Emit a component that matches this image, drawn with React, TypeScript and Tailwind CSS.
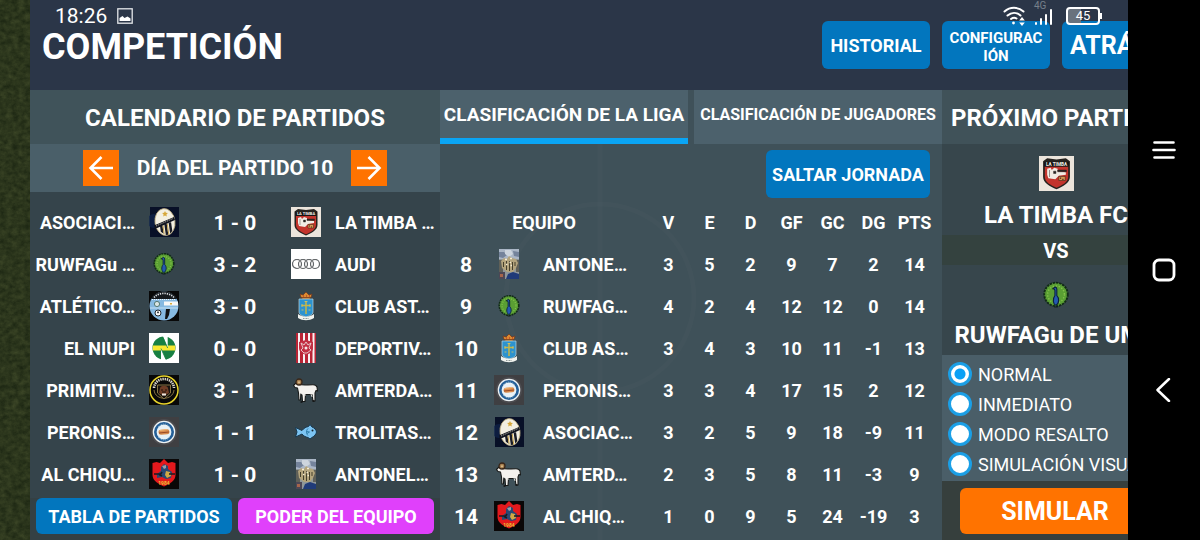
import React, { useState } from "react";

type CrestName =
  | "asociacion"
  | "timba"
  | "peacock"
  | "audi"
  | "atletico"
  | "asturias"
  | "niupi"
  | "deportivo"
  | "primitivos"
  | "ram"
  | "peronistas"
  | "fish"
  | "chiqui"
  | "antonel";

const crestArt: Record<CrestName, React.ReactNode> = {
  asociacion: (
    <>
      <rect x="1" width="29" height="30" fill="#081027" />
      <circle cx="5" cy="14" r="7" fill="#10234c" opacity=".7" />
      <g transform="rotate(-8 16 15)">
        <ellipse cx="16" cy="15" rx="10" ry="13.5" fill="#f3efe2" stroke="#b9a878" strokeWidth=".8" />
        <path d="M10.500 18H13v8.500L10.500 24zM15 17h2.500v11H15zM19.500 16H22v9l-2.500 2z" fill="#1a1c26" />
        <path d="M13 18h1v9l-1-.5zM17.500 17h1v11h-1z" fill="#c6a14a" />
      </g>
      <path d="m16 4 .9 1.800 2 .2-1.500 1.400.4 2-1.800-1-1.800 1 .4-2-1.500-1.400 2-.2z" fill="#d6a73a" />
      <path d="m5 18.500 20-8.500 1 3-20 9z" fill="#11141f" />
      <path d="m7 19 17-7.500" stroke="#d8d3c2" strokeWidth=".8" strokeDasharray="1.200 .8" />
    </>
  ),
  timba: (
    <>
      <rect width="30" height="30" fill="#ece5dc" />
      <path d="M3.500 4.500 7 2l8 1 8-1 3.500 2.500V18c0 5-6 8-11.500 10.500C9.500 26 3.500 23 3.500 18z" fill="#26231f" />
      <path d="M5 9h20v9c0 4.500-5 7-10 9.300C10 25 5 22.500 5 18z" fill="#c3342c" />
      <path d="M4.500 5h21v4h-21z" fill="#151515" />
      <text x="15" y="8.400" fontSize="4" fontWeight="700" textAnchor="middle" fill="#f4f0e8">LA TIMBA</text>
      <path d="m7 11 3-1 1 2 2-2 3 1v2l7 1v2l-6 1-3 3-6-1-1-3z" fill="#f1ece4" />
      <path d="M12.500 13h2v2h-2zM16 12h7.500v1.500H16zM9 12v6" fill="#292522" stroke="#292522" strokeWidth=".4" />
      <path d="M17 17.500h5.500V21H17z" fill="#d59853" stroke="#3a2217" strokeWidth=".5" />
      <path d="M18 19h1M20 20h1" stroke="#3a2217" />
    </>
  ),
  peacock: (
    <>
      <circle cx="15" cy="14.500" r="9.800" fill="#5a9f33" stroke="#122b18" strokeWidth="1.600" strokeDasharray="2 .7" />
      <circle cx="15" cy="14.500" r="7" fill="none" stroke="#86c44c" strokeWidth="1.200" strokeDasharray="1 1.500" />
      <path d="M13 9.500c.5-1.500 2.500-1.500 2.700.5v5.500c2.300 2 1.800 7-.7 8-2.500-.5-3-5.500-.9-8V11z" fill="#2459b0" stroke="#0c213b" strokeWidth=".9" />
      <path d="M11.800 9.800h1.500M13.500 25h3" stroke="#101f20" />
    </>
  ),
  audi: (
    <>
      <rect width="30" height="30" fill="#fff" />
      <g fill="none" stroke="#24282b" strokeWidth="1.100">
        <circle cx="6" cy="15" r="4.500" />
        <circle cx="12" cy="15" r="4.500" />
        <circle cx="18" cy="15" r="4.500" />
        <circle cx="24" cy="15" r="4.500" />
      </g>
      <g fill="none" stroke="#c5c8ca" strokeWidth=".4">
        <circle cx="6" cy="15" r="4.500" />
        <circle cx="12" cy="15" r="4.500" />
        <circle cx="18" cy="15" r="4.500" />
        <circle cx="24" cy="15" r="4.500" />
      </g>
    </>
  ),
  atletico: (
    <>
      <rect width="30" height="30" fill="#080808" />
      <circle cx="15" cy="15" r="14.500" fill="#86b9e1" />
      <path d="M2 8C7-2 23-2 28 8z" fill="#15191d" />
      <path d="M5 6.500C10 1 20 1 25 6.500" fill="none" stroke="#d8dce0" strokeWidth="1.600" strokeDasharray="1.300 1" />
      <path d="M3 8.500h24" stroke="#f4f8fa" strokeDasharray="1 1" />
      <path d="M15 10.500h14v4H15z" fill="#f7f7f7" />
      <path d="M21 12h2v1.500h-2z" fill="#dcac38" />
      <circle cx="8" cy="13" r="2.600" fill="#dbe6e4" stroke="#577b75" />
      <path d="M1 17h28" stroke="#c7e2f6" />
      <circle cx="9" cy="22" r="3" fill="#fafafa" stroke="#22272d" />
      <path d="m8 21 1-.8 1 .8-.4 1.300H8.400z" fill="#22272d" />
      <path d="M17 18h4l-1 6-2 4h-2z" fill="#111" />
    </>
  ),
  asturias: (
    <>
      <path d="M10 4h10l-1.500 4h-7z" fill="#b77227" />
      <path d="m9 3 3 1 3-3 3 3 3-1-1 3.500H10z" fill="#d98b31" stroke="#6f3520" strokeWidth=".7" />
      <path d="M12 5h1m2 0h1m2 0h1" stroke="#b72323" />
      <path d="M8 8h14v13c0 3-4 4-7 5-3-1-7-2-7-5z" fill="#2d93cf" stroke="#b9d4df" strokeWidth=".7" />
      <path d="M15 10v13M10.500 14.500h9" stroke="#c8b645" strokeWidth="1.500" />
      <path d="M13.500 10.500h3M11 13v3m8-3v3M10.500 19h2m5 0h2" stroke="#d8c65f" strokeWidth=".8" />
      <path d="M7 23c5 3.500 11 3.500 16 0v4c-5 3-11 3-16 0z" fill="#f0f2ee" />
      <path d="M12 27.500h6" stroke="#929c9a" strokeDasharray="1 .5" />
    </>
  ),
  niupi: (
    <>
      <rect width="30" height="30" fill="#fff" />
      <circle cx="15" cy="15" r="11.500" fill="#188042" />
      <path d="M3.800 12.500h22.400v5H3.800z" fill="#f8e831" />
      <path d="M13.500 2h5.200v13z" fill="#fff" />
      <path d="M12 28V15.500L17.500 28z" fill="#fff" />
      <path d="m12 15.500 5 11M14 4.500l4.700 10.500" stroke="#188042" strokeWidth=".8" />
    </>
  ),
  deportivo: (
    <>
      <rect x="5" width="20" height="30" fill="#f7f2f3" />
      <path d="M5 0h2v30H5zM9 0h3v30H9zM14 0h3v30h-3zM19 0h2.500v30H19zM23.500 0H25v30h-1.500z" fill="#b92435" />
      <path d="m8 9 7-2 7 2v6c0 4-4 6-7 7-3-1-7-3-7-7z" fill="#c23043" />
      <path d="m10 10 3 2 2-3 2 3 3-2-2 5 2 2-4 3h-3l-3-3 2-2z" fill="none" stroke="#ead2d2" strokeWidth=".9" />
      <circle cx="15" cy="15" r="1.500" fill="#f6e8e8" />
    </>
  ),
  primitivos: (
    <>
      <rect width="30" height="30" fill="#080808" />
      <circle cx="15" cy="15" r="14" fill="#080808" stroke="#e8d42c" strokeWidth="1.500" />
      <path d="M5 13C6 1 24 1 25 13" fill="none" stroke="#ddd9cd" strokeWidth="2.600" strokeDasharray="1.400 .8" />
      <path d="M5 15c1 11 19 11 20 0" fill="none" stroke="#95804a" strokeWidth=".9" />
      <path d="M8.500 10h13v8L15 24l-6.500-6z" fill="#17130f" stroke="#877444" />
      <path d="M11 13c1-3 7-3 8 0l1 5-5 3-5-3z" fill="#6f3d25" />
      <path d="M12 15h2m2 0h2m-5 2h4" stroke="#20130d" />
      <path d="M13 18.500h4v2h-4z" fill="#ede8df" />
    </>
  ),
  ram: (
    <>
      <path d="M8 9.500c3 .8 8 .3 14 .3 2 0 3.500.7 4 2.200l.5 4-1.500-.5-1 2.500v8h-2l-1-6.500h-6.500l-.5 7h-2.500l-.5-6.500-1-.5-.2-.5-.3 6H8l-.5-7L6.500 13 4 12.500 2.500 10.500 5 8z" fill="#f4f2ee" stroke="#171918" strokeWidth="1.100" strokeLinejoin="round" />
      <path d="M14 19v2m6-2 1 3" stroke="#d7d7d3" />
      <circle cx="8" cy="7" r="3" fill="#a8804f" stroke="#39271a" strokeWidth="1.300" />
      <circle cx="8" cy="7.200" r="1" fill="#d9bd90" />
      <path d="M9.500 27h2m10-1h2" stroke="#111" strokeWidth="1.500" />
    </>
  ),
  peronistas: (
    <>
      <rect width="30" height="30" fill="#3f3f42" />
      <circle cx="15" cy="15" r="13" fill="#4c4c50" />
      <circle cx="15" cy="15" r="10" fill="#e8f1f6" stroke="#edf2f4" strokeWidth="2.600" />
      <circle cx="15" cy="15" r="8.700" fill="none" stroke="#245f98" strokeWidth="2.600" />
      <path d="M9 10c4-4 8-4 12 0M9 20c4 4 8 4 12 0" fill="none" stroke="#9fc7dc" strokeWidth=".8" strokeDasharray="1 1" />
      <rect x="9.500" y="12.500" width="11" height="5" rx="2.500" fill="#d98c4d" transform="rotate(-5 15 15)" />
      <path d="m10 16 10-1" stroke="#994925" />
      <path d="m11 13.500 7-1" stroke="#f0b575" />
    </>
  ),
  fish: (
    <>
      <path d="M4.500 10.500 11 13.500c2-2.500 4-3.500 6.500-4L19 7.500l2 2.500c2.500 1 4 2.500 4.500 5-.5 2.500-2 4-4.500 5.500L19 22l-2-1.500c-2.500-.5-4.500-1.500-6-3.500L4.500 20l1.500-5z" fill="#7cc4f2" stroke="#17384f" strokeWidth="1" strokeLinejoin="round" />
      <path d="M17 11.500c-2 2-2 5 0 7m-1.500-4 3 .5-2.500 1.500" fill="none" stroke="#2f7fad" strokeWidth="1" />
      <circle cx="21.500" cy="13.500" r="1" fill="#14232c" />
    </>
  ),
  chiqui: (
    <>
      <rect width="30" height="30" fill="#0a0707" />
      <path d="m3.500 4 4-1 3.500 1 4-4 4 4 4-1 3.500 1v12c0 6-6 9-11.500 11.500C9.500 25 3.500 22 3.500 16z" fill="#e4191d" />
      <path d="m12 8 3-3 4 2v3l4 3-1 6-5 1-4-2-5 1v-4l4-3z" fill="#294873" />
      <path d="m13 7 4-1v3l-2 1z" fill="#9a9fa8" />
      <path d="m17 12 4 1 1 4-4 2-2-3z" fill="#d1a943" />
      <path d="M5 15h7m8 0h6M13 13l-2 3 2 1" fill="none" stroke="#181a22" strokeWidth="1.600" />
      <text x="15" y="26" fontSize="5" fontWeight="700" textAnchor="middle" fill="#e8c332">1984</text>
    </>
  ),
  antonel: (
    <>
      <rect x="5" width="20" height="30" fill="#8f979a" />
      <path d="M5 0h20v10H5z" fill="#aab6c6" />
      <path d="M5 3h5l3 3-4 3-4-1zM19 2l6 1v5l-5-1z" fill="#74839b" />
      <path d="M11 1h6l2 4-4 3-4-3z" fill="#cdd5de" />
      <path d="M5 11h4v13H5zM22 11h3v12h-3z" fill="#5f6058" />
      <path d="m7 12 3-3 3 1 2-3 3 2 4 1 2 4-2 5-3 4h-6l-5-4z" fill="#b3a47d" />
      <path d="M9.500 13v5m3-6v9m3-9v10m3-9v8m2.500-8v4" stroke="#443f2c" />
      <path d="M11 10.500h2m3-1h2m-6 6h1.500m3 1H18m-2.500-3H17" stroke="#f5ecd2" strokeWidth="1.400" />
      <path d="M5 23h6v7H5z" fill="#4d4755" />
      <path d="m14 25 5-2 6 2v5H12z" fill="#203b79" />
      <path d="M6 25h3v3H6z" fill="#a7654c" />
    </>
  ),
};

function Crest({ name, className = "size-[30px]" }: { name: CrestName; className?: string }) {
  return (
    <svg viewBox="0 0 30 30" className={`block shrink-0 ${className}`} aria-hidden="true">
      {crestArt[name]}
    </svg>
  );
}

const matches: [string, CrestName, string, CrestName, string][] = [
  ["ASOCIACI…", "asociacion", "1 - 0", "timba", "LA TIMBA …"],
  ["RUWFAGu …", "peacock", "3 - 2", "audi", "AUDI"],
  ["ATLÉTICO…", "atletico", "3 - 0", "asturias", "CLUB AST…"],
  ["EL NIUPI", "niupi", "0 - 0", "deportivo", "DEPORTIV…"],
  ["PRIMITIV…", "primitivos", "3 - 1", "ram", "AMTERDA…"],
  ["PERONIS…", "peronistas", "1 - 1", "fish", "TROLITAS…"],
  ["AL CHIQU…", "chiqui", "1 - 0", "antonel", "ANTONEL…"],
];

const columns = ["V", "E", "D", "GF", "GC", "DG", "PTS"];

const standings: [number, CrestName, string, number[]][] = [
  [8, "antonel", "ANTONE…", [3, 5, 2, 9, 7, 2, 14]],
  [9, "peacock", "RUWFAG…", [4, 2, 4, 12, 12, 0, 14]],
  [10, "asturias", "CLUB AS…", [3, 4, 3, 10, 11, -1, 13]],
  [11, "peronistas", "PERONIS…", [3, 3, 4, 17, 15, 2, 12]],
  [12, "asociacion", "ASOCIAC…", [3, 2, 5, 9, 18, -9, 11]],
  [13, "ram", "AMTERD…", [2, 3, 5, 8, 11, -3, 9]],
  [14, "chiqui", "AL CHIQ…", [1, 0, 9, 5, 24, -19, 3]],
];

const modes = ["NORMAL", "INMEDIATO", "MODO RESALTO", "SIMULACIÓN VISUAL"];

function Grass() {
  return (
    <svg className="absolute inset-0 size-full" aria-hidden="true">
      <filter id="grass" x="0" y="0" width="100%" height="100%" colorInterpolationFilters="sRGB">
        <feTurbulence type="fractalNoise" baseFrequency="0.16 0.2" numOctaves="4" seed="4" />
        <feColorMatrix values="0.16 0 0 0 0.09  0.16 0 0 0 0.13  0.1 0 0 0 0.06  0 0 0 0 1" />
      </filter>
      <rect width="100%" height="100%" filter="url(#grass)" />
    </svg>
  );
}

function StatusBar() {
  return (
    <div className="pointer-events-none absolute inset-x-0 top-0 z-10 flex h-8 items-center pr-7 pl-[25px] text-white">
      <span className="text-[21px] leading-8">18:26</span>
      <svg viewBox="0 0 16 16" className="ml-2.5 size-4" aria-hidden="true">
        <rect x=".8" y=".8" width="14.400" height="14.400" fill="none" stroke="#e4e7ea" strokeWidth="1.300" />
        <path d="M2.500 13V10l3-2 2 2 3-1.500 3 2V13z" fill="#fff" />
      </svg>
      <span className="flex-1" />
      <svg viewBox="0 0 24 22" className="h-[22px] w-6" fill="none" stroke="#fff" strokeWidth="2" strokeLinecap="round" aria-hidden="true">
        <path d="M2.500 6.500c5.500-5 13.500-5 19 0M5.500 10.500c4-3.500 9-3.500 13 0M9 14c2-1.500 4-1.500 5.500-.5" />
        <circle cx="11.500" cy="18" r="1.400" fill="#fff" stroke="none" />
        <path d="m20 12 2.800 3.500h-5.600zM20 21l2.800-3.500h-5.600z" fill="#fff" stroke="none" />
      </svg>
      <span className="relative ml-2 h-[18px] w-5">
        <span className="absolute -top-[7px] left-0 text-[10px] leading-3 text-[#77808b]">4G</span>
        <svg viewBox="0 0 20 18" className="size-full" stroke="#fff" strokeWidth="2" strokeLinecap="round" aria-hidden="true">
          <path d="M2 16v1M7 12v5M12 8v9M17 3v14" />
        </svg>
      </span>
      <span className="relative ml-3 flex h-[18px] w-[34px] items-center justify-center rounded border-2 border-white bg-linear-to-r from-[#69727d] from-45% to-transparent to-45% text-[13px] leading-4">
        45
        <span className="absolute top-1 -right-1 h-1.5 w-0.5 bg-white" />
      </span>
    </div>
  );
}

export default function App() {
  const [mode, setMode] = useState(modes[0]);
  return (
    <div className="flex h-screen overflow-hidden bg-black font-['Roboto',sans-serif] text-white">
      <div className="relative w-[30px] shrink-0 bg-[#2b351c]">
        <Grass />
      </div>

      <div className="relative flex min-w-0 flex-1 flex-col overflow-hidden">
        <StatusBar />
        <header className="flex h-[90px] shrink-0 items-start bg-[#2b3648] pl-3">
          <h1 className="flex-1 pt-[23px] text-4xl leading-12 font-bold">COMPETICIÓN</h1>
          <div className="-mr-[42px] flex shrink-0 gap-3 pt-[21px] font-bold">
            <button className="h-12 w-[108px] rounded-md bg-[#0276be] pt-0.5 text-lg">HISTORIAL</button>
            <button className="h-12 w-[108px] rounded-md bg-[#0276be] pt-1 text-[15px] leading-[18px]">
              CONFIGURAC
              <br />
              IÓN
            </button>
            <button className="h-12 w-[108px] rounded-md bg-[#0276be] pt-0.5 pl-2 text-left text-[25px]">ATRÁS</button>
          </div>
        </header>

        <main className="flex min-h-0 flex-1">
          <section className="flex min-w-0 flex-[410] flex-col bg-[#35444b]">
            <h2 className="h-[54px] shrink-0 bg-[#40535a] text-center text-2xl leading-[56px] font-bold">CALENDARIO DE PARTIDOS</h2>
            <div className="flex h-12 shrink-0 items-center justify-center gap-[18px] bg-[#4a5f69]">
              <button aria-label="Anterior" className="flex size-9 items-center justify-center bg-[#ff7300]">
                <svg viewBox="0 0 36 36" className="size-9" fill="none" stroke="#fff" strokeWidth="2.600" aria-hidden="true">
                  <path d="M30 18H8M18.500 7 7.500 18l11 11" />
                </svg>
              </button>
              <span className="pt-0.5 text-[21px] font-bold">DÍA DEL PARTIDO 10</span>
              <button aria-label="Siguiente" className="flex size-9 items-center justify-center bg-[#ff7300]">
                <svg viewBox="0 0 36 36" className="size-9" fill="none" stroke="#fff" strokeWidth="2.600" aria-hidden="true">
                  <path d="M6 18h22M17.500 7l11 11-11 11" />
                </svg>
              </button>
            </div>
            <ul className="flex-1 px-1.5 pt-[9px] font-bold whitespace-nowrap">
              {matches.map(([home, homeCrest, score, awayCrest, away]) => (
                <li key={home} className="grid h-[42px] grid-cols-[1fr_30px_84px_30px_1fr] items-center gap-x-3.5 text-lg">
                  <span className="flex min-w-0 justify-end pt-0.5">{home}</span>
                  <Crest name={homeCrest} />
                  <span className="pt-0.5 text-center text-[21px]">{score}</span>
                  <Crest name={awayCrest} />
                  <span className="min-w-0 pt-0.5">{away}</span>
                </li>
              ))}
            </ul>
            <div className="flex h-[42px] shrink-0 gap-1.5 bg-[#344044] px-1.5 pb-1.5 text-lg font-bold">
              <button className="flex-1 rounded-md bg-[#0276be] pt-0.5">TABLA DE PARTIDOS</button>
              <button className="flex-1 rounded-md bg-[#e040fb] pt-0.5">PODER DEL EQUIPO</button>
            </div>
          </section>

          <section className="relative flex min-w-0 flex-[502] flex-col bg-[#3f5159]">
            <svg className="pointer-events-none absolute inset-0 size-full" fill="none" stroke="#ffffff" strokeOpacity=".015" strokeWidth="5" aria-hidden="true">
              <circle cx="160" cy="208" r="94" />
              <path d="M160 0v450" />
            </svg>
            <div className="relative flex h-[54px] shrink-0 gap-1.5 font-bold whitespace-nowrap">
              <button className="flex-1 border-b-6 border-[#0aa5f5] bg-[#4c616c] pt-0.5 text-[19px]">CLASIFICACIÓN DE LA LIGA</button>
              <button className="flex-1 bg-[#4c616c] pb-1 text-base">CLASIFICACIÓN DE JUGADORES</button>
            </div>
            <div className="relative flex justify-end px-3 pt-1.5">
              <button className="h-12 w-[164px] rounded-md bg-[#0276be] pt-0.5 text-lg font-bold whitespace-nowrap">SALTAR JORNADA</button>
            </div>
            <div className="relative pt-[3px] pr-[7px]">
              <table className="w-full table-fixed text-center text-lg font-bold whitespace-nowrap">
                <colgroup>
                  <col className="w-[52px]" />
                  <col className="w-[34px]" />
                  <col />
                  {columns.map((c) => (
                    <col key={c} className="w-[41px]" />
                  ))}
                </colgroup>
                <thead>
                  <tr className="h-[42px]">
                    <th colSpan={3} className="pt-0.5">EQUIPO</th>
                    {columns.map((c) => (
                      <th key={c} className="pt-0.5">{c}</th>
                    ))}
                  </tr>
                </thead>
                <tbody>
                  {standings.map(([rank, crest, team, values]) => (
                    <tr key={rank} className="h-[42px]">
                      <td className="pt-0.5 text-[21px] leading-7">{rank}</td>
                      <td className="pl-0.5">
                        <Crest name={crest} />
                      </td>
                      <td className="pt-0.5 pl-[17px] text-left">{team}</td>
                      {values.map((v, i) => (
                        <td key={columns[i]} className="pt-0.5">{v}</td>
                      ))}
                    </tr>
                  ))}
                </tbody>
              </table>
            </div>
          </section>

          <section className="w-[186px] shrink-0 overflow-hidden bg-[#37464c]">
            <div className="flex h-full w-[228px] flex-col font-bold whitespace-nowrap">
              <h2 className="h-[54px] shrink-0 bg-[#405259] pl-[9px] text-2xl leading-[56px]">PRÓXIMO PARTIDO</h2>
              <div className="flex flex-col items-center pt-3">
                <Crest name="timba" className="size-[35px]" />
                <p className="pt-2 text-2xl leading-8">LA TIMBA FC</p>
                <p className="mt-1 h-[30px] w-full bg-[#34423f] text-center text-xl leading-8">VS</p>
                <Crest name="peacock" className="mt-3 size-9" />
                <p className="pt-1 text-2xl leading-9">RUWFAGu DE UMA</p>
              </div>
              <fieldset className="mt-0.5 h-[126px] shrink-0 bg-[#4a5e68] px-1.5 pt-1 font-normal">
                {modes.map((m) => (
                  <label key={m} className="flex h-[30px] items-center gap-1.5 text-lg">
                    <input
                      type="radio"
                      name="modo"
                      checked={mode === m}
                      onChange={() => setMode(m)}
                      className="size-6 shrink-0 appearance-none rounded-full border-3 border-[#1b9fe6] bg-white checked:bg-[radial-gradient(circle,#0aa0f5_5px,#ffffff_6px)]"
                    />
                    <span className="pt-0.5">{m}</span>
                  </label>
                ))}
              </fieldset>
              <div className="flex-1 bg-[#363f3d] pt-[7px] pl-[18px]">
                <button className="h-[46px] w-[190px] rounded-md bg-[#ff7300] pt-0.5 text-[25px]">SIMULAR</button>
              </div>
            </div>
          </section>
        </main>
      </div>

      <nav className="flex w-[72px] shrink-0 flex-col items-center justify-center gap-24 bg-black">
        <button aria-label="Menú" className="size-6">
          <svg viewBox="0 0 24 24" className="size-6" stroke="#fff" strokeWidth="2.600" strokeLinecap="round" aria-hidden="true">
            <path d="M2.500 4.500h19M1.500 12h21M2.500 19.500h19" />
          </svg>
        </button>
        <button aria-label="Inicio" className="size-6">
          <svg viewBox="0 0 24 24" className="size-6" aria-hidden="true">
            <rect x="2" y="2" width="20" height="20" rx="5" fill="none" stroke="#fff" strokeWidth="2.800" />
          </svg>
        </button>
        <button aria-label="Atrás" className="size-6">
          <svg viewBox="0 0 24 24" className="size-6" fill="none" stroke="#fff" strokeWidth="2.500" strokeLinecap="round" strokeLinejoin="round" aria-hidden="true">
            <path d="M17 1 5.500 12 17 23" />
          </svg>
        </button>
      </nav>
    </div>
  );
}
